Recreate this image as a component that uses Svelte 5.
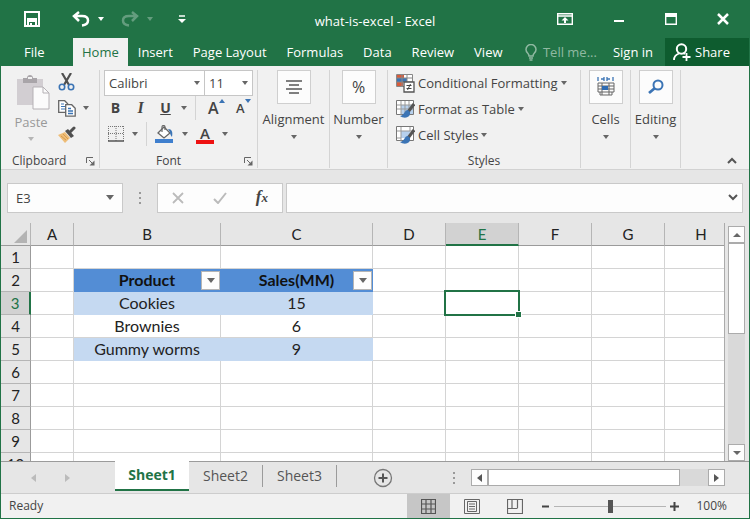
<script>
    let columns = ['A', 'B', 'C', 'D', 'E', 'F', 'G', 'H'];
    let rows = [1, 2, 3, 4, 5, 6, 7, 8, 9, 10];
    let cells = {
        B2: 'Product',
        C2: 'Sales(MM)',
        B3: 'Cookies',
        C3: '15',
        B4: 'Brownies',
        C4: '6',
        B5: 'Gummy worms',
        C5: '9',
    };
    let menu = ['Insert', 'Page Layout', 'Formulas', 'Data', 'Review', 'View'];
    let sheets = ['Sheet1', 'Sheet2', 'Sheet3'];

    let activeCol = 'E';
    let activeRow = 3;
    let activeSheet = 'Sheet1';
    let formula = '';
    let zoom = 100;

    $: cellName = activeCol + activeRow;

    function select(col, row) {
        activeCol = col;
        activeRow = row;
        formula = cells[col + row] || '';
    }

    function inTable(col, row) {
        return (col === 'B' || col === 'C') && row >= 2 && row <= 5;
    }
</script>

<div class="window">
    <header class="titlebar">
        <div class="quick">
            <button class="save" aria-label="Save">
                <svg width="16" height="16" viewBox="0 0 16 16"><path d="M1 1h14v14H1z" fill="none" stroke="#fff" stroke-width="2" /><path d="M3 8h10M4 14v-4h8v4" fill="none" stroke="#fff" stroke-width="2" /><path d="M6 12h2v3H6z" fill="#fff" /></svg>
            </button>
            <button aria-label="Undo">
                <svg width="18" height="16" viewBox="0 0 18 16"><path d="M7 1 2 5l5 5M2 5h8c4 0 6 2 6 4.500S14 14 10 14.500" fill="none" stroke="#fff" stroke-width="2.500" /></svg>
                <span class="arrow light"></span>
            </button>
            <button class="faded" aria-label="Redo">
                <svg width="18" height="16" viewBox="0 0 18 16"><path d="m11 1 5 4-5 5M16 5H8C4 5 2 7 2 9.500S4 14 8 14.500" fill="none" stroke="#fff" stroke-width="2.500" /></svg>
                <span class="arrow light"></span>
            </button>
            <button aria-label="Customize Quick Access Toolbar">
                <svg width="8" height="8" viewBox="0 0 8 8"><path d="M1 1h6" stroke="#fff" stroke-width="1.500" /><path d="M0 4h8L4 8z" fill="#fff" /></svg>
            </button>
        </div>
        <div class="title">what-is-excel - Excel</div>
        <div class="controls">
            <button aria-label="Ribbon Display Options">
                <svg width="16" height="12" viewBox="0 0 16 12"><path d="M.7.7h14.600v10.600H.7zM1 3h14" fill="none" stroke="#fff" stroke-width="1.400" /><path d="M8 4 4.500 7.500H7V10h2V7.500h2.500z" fill="#fff" /></svg>
            </button>
            <button aria-label="Minimize">
                <svg width="12" height="12" viewBox="0 0 12 12"><path d="M1 8h10" stroke="#fff" stroke-width="2" /></svg>
            </button>
            <button aria-label="Maximize">
                <svg width="12" height="12" viewBox="0 0 12 12"><path d="M.7.7h10.600v10.600H.7z" fill="none" stroke="#fff" stroke-width="1.400" /><path d="M0 0h12v4H0z" fill="#fff" /></svg>
            </button>
            <button aria-label="Close">
                <svg width="12" height="12" viewBox="0 0 12 12"><path d="m1 1 10 10M11 1 1 11" stroke="#fff" stroke-width="2.500" /></svg>
            </button>
        </div>
    </header>

    <nav class="tabs">
        <button class="file">File</button>
        <button class="home">Home</button>
        {#each menu as item}
            <button>{item}</button>
        {/each}
        <button class="tell">
            <svg width="12" height="17" viewBox="0 0 12 17"><path d="M4 12c0-3-3-3-3-6.500a5 5 0 0 1 10 0C11 9 8 9 8 12zM4 14h4M4.500 16h3" fill="none" stroke="currentColor" stroke-width="1.500" /></svg>
            Tell me...
        </button>
        <button class="signin">Sign in</button>
        <button class="share">
            <svg width="18" height="18" viewBox="0 0 18 18"><circle cx="8.500" cy="6" r="4.700" fill="none" stroke="#fff" stroke-width="2" /><path d="M1 17c0-4 2-5.500 5-6.500M10 10l2 1M13.500 10v8M9.500 14h8" fill="none" stroke="#fff" stroke-width="1.800" /></svg>
            Share
        </button>
    </nav>

    <section class="ribbon">
        <div class="group clipboard">
            <div class="tools">
                <button class="paste">
                    <svg width="34" height="36" viewBox="0 0 34 36"><path d="M1 5h26v26H1z" fill="#d2ced2" /><path d="M7 9V4h4c0-4 6-4 6 0h4v5z" fill="#a9a5a9" /><path d="M12 3h4v2h-4z" fill="#f1f1f1" /><path d="M17 13h10l6 6v16H17z" fill="#fbfbfb" stroke="#b5b1b5" /><path d="M27 13v6h6" fill="none" stroke="#b5b1b5" /></svg>
                    <span>Paste</span>
                    <span class="arrow"></span>
                </button>
                <div class="stack">
                    <button aria-label="Cut">
                        <svg width="17" height="18" viewBox="0 0 17 18"><path d="m4 0 7 12M13 0 6 12" stroke="#505050" stroke-width="2.200" /><circle cx="4" cy="14" r="2.700" fill="none" stroke="#3b74b5" stroke-width="1.600" /><circle cx="13" cy="14" r="2.700" fill="none" stroke="#3b74b5" stroke-width="1.600" /></svg>
                    </button>
                    <button aria-label="Copy">
                        <svg width="18" height="17" viewBox="0 0 18 17"><path d="M.7.7h6l3 3v8.600h-9z" fill="#fff" stroke="#666" stroke-width="1.300" /><path d="M3 4h3M3 6.500h4M3 9h4" stroke="#3b74b5" /><path d="M7.700 4.700h6l3.500 3.500v8H7.700z" fill="#fff" stroke="#666" stroke-width="1.300" /><path d="M10 8.500h3M10 11h5M10 13.500h5" stroke="#3b74b5" stroke-width="1.300" /></svg>
                        <span class="arrow"></span>
                    </button>
                    <button aria-label="Format Painter">
                        <svg width="18" height="17" viewBox="0 0 18 17"><path d="m0 9 7-3 5 6-5 5z" fill="#eebd78" /><path d="m3 10 5 4M5 8l5 5" stroke="#d79b4d" /><path d="m7 5 3-2 6 7-3 2z" fill="#505050" /><path d="m12 6 4-4" stroke="#505050" stroke-width="3" stroke-linecap="round" /></svg>
                    </button>
                </div>
            </div>
            <div class="caption"><span>Clipboard</span>
                <button class="launcher" aria-label="Clipboard settings"><svg width="9" height="9" viewBox="0 0 9 9"><path d="M.5 6V.5H7M3 3l4 4" fill="none" stroke="#666" /><path d="M8.500 3.500v5h-5z" fill="#666" /></svg></button>
            </div>
        </div>

        <div class="group font">
            <div class="tools">
                <div class="pickers">
                    <div class="picker family"><select aria-label="Font"><option>Calibri</option></select><span class="arrow"></span></div>
                    <div class="picker"><select aria-label="Font size"><option>11</option></select><span class="arrow"></span></div>
                </div>
                <div class="line">
                    <button class="letter"><b>B</b></button>
                    <button class="letter"><i>I</i></button>
                    <button class="letter"><u>U</u></button>
                    <button class="drop" aria-label="Underline options"><span class="arrow"></span></button>
                    <span class="rule"></span>
                    <button class="grow" aria-label="Increase font size">A<svg width="6" height="4" viewBox="0 0 6 4"><path d="M0 4h6L3 0z" fill="#3b74b5" /></svg></button>
                    <button class="grow small" aria-label="Decrease font size">A<svg width="6" height="4" viewBox="0 0 6 4"><path d="M0 0h6L3 4z" fill="#3b74b5" /></svg></button>
                </div>
                <div class="line second">
                    <button aria-label="Borders">
                        <svg width="16" height="16" viewBox="0 0 16 16"><path d="M.5 0v15M15.500 0v15M0 .5h16M0 7.500h16M8 0v15" fill="none" stroke="#777" stroke-dasharray="1 1" /><path d="M0 15h16" stroke="#555" stroke-width="1.500" /></svg>
                        <span class="arrow"></span>
                    </button>
                    <span class="rule"></span>
                    <button aria-label="Fill color">
                        <svg width="19" height="19" viewBox="0 0 19 19"><path d="m3 8 6-6 6 6-6 5z" fill="#fff" stroke="#666" stroke-width="1.300" /><path d="M7 7V2c0-2 3-2 3 0v3" fill="none" stroke="#666" stroke-width="1.200" /><path d="M13 4c4 0 5 3 4 8-1-1-2-3-2-5z" fill="#3b74b5" /><path d="M0 14h18v4H0z" fill="#3f7fce" /></svg>
                        <span class="arrow"></span>
                    </button>
                    <button aria-label="Font color">
                        <span class="color">A</span>
                        <span class="arrow"></span>
                    </button>
                </div>
            </div>
            <div class="caption"><span>Font</span>
                <button class="launcher" aria-label="Font settings"><svg width="9" height="9" viewBox="0 0 9 9"><path d="M.5 6V.5H7M3 3l4 4" fill="none" stroke="#666" /><path d="M8.500 3.500v5h-5z" fill="#666" /></svg></button>
            </div>
        </div>

        <div class="group alignment">
            <button class="big">
                <span class="tile"><svg width="18" height="14" viewBox="0 0 18 14"><path d="M1 1h16M4 5h10M1 9h16M4 13h10" stroke="#555" stroke-width="1.300" /></svg></span>
                Alignment
                <span class="arrow"></span>
            </button>
        </div>
        <div class="group number">
            <button class="big">
                <span class="tile percent">%</span>
                Number
                <span class="arrow"></span>
            </button>
        </div>

        <div class="group styles">
            <div class="tools">
                <button>
                    <svg width="19" height="19" viewBox="0 0 19 19"><path d="M.5.500h16v12H.5z" fill="#fff" stroke="#888" /><path d="M1 1h7v3H1zM1 8h6v4H1z" fill="#d75b3b" /><path d="M1 4h10v4H1z" fill="#3b74b5" /><path d="M11 0v12M6 0v12M0 4h16M0 8h16" stroke="#888" /><path d="M8 8h10v10H8z" fill="#fff" stroke="#555" stroke-width="1.300" /><path d="M10.500 11.500h5M10.500 14.500h5M14.500 10l-3 6" stroke="#444" /></svg>
                    Conditional Formatting<span class="arrow"></span>
                </button>
                <button>
                    <svg width="19" height="19" viewBox="0 0 19 19"><path d="M.5.500h17v14H.5z" fill="#fff" stroke="#777" /><path d="M5 5h12v9H5z" fill="#b6d0ed" /><path d="M5 1v14M9 1v14M13 1v14M1 5h16M1 9h16" stroke="#999" /><path d="m18 4-6 8" stroke="#555" stroke-width="3" /><path d="M12 10c-4 0-3 5-8 6 4 3 11 2 10-4z" fill="#3b74b5" /></svg>
                    Format as Table<span class="arrow"></span>
                </button>
                <button>
                    <svg width="19" height="19" viewBox="0 0 19 19"><path d="M.5.500h17v14H.5z" fill="#fff" stroke="#777" /><path d="M5 5h9v7H5z" fill="#b6d0ed" /><path d="M5 1v14M14 1v4M1 5h16M1 12h4" stroke="#999" /><path d="m18 4-6 8" stroke="#555" stroke-width="3" /><path d="M12 10c-4 0-3 5-8 6 4 3 11 2 10-4z" fill="#3b74b5" /></svg>
                    Cell Styles<span class="arrow"></span>
                </button>
            </div>
            <div class="caption"><span>Styles</span></div>
        </div>

        <div class="group narrow">
            <button class="big">
                <span class="tile"><svg width="18" height="20" viewBox="0 0 18 20"><path d="M1 0v4M16 0v4M4 2h3M10 2h3M7 0v4M10 0v4" stroke="#3b74b5" stroke-width="1.300" /><path d="M1 6h16v9H1zM3 15v3h12v-3M1 9h16M1 12h16M5 6v12M12 6v12" fill="none" stroke="#666" /><path d="M5 9h6v4H5z" fill="#2f6cb3" /></svg></span>
                Cells
                <span class="arrow"></span>
            </button>
        </div>
        <div class="group narrow">
            <button class="big">
                <span class="tile"><svg width="16" height="16" viewBox="0 0 16 16"><circle cx="10" cy="6" r="4.500" fill="none" stroke="#3b74b5" stroke-width="2" /><path d="m7 9-6 5" stroke="#3b74b5" stroke-width="2.800" /></svg></span>
                Editing
                <span class="arrow"></span>
            </button>
        </div>
        <button class="collapse" aria-label="Collapse the ribbon">
            <svg width="10" height="7" viewBox="0 0 10 7"><path d="m1 6 4-4 4 4" fill="none" stroke="#555" stroke-width="2" /></svg>
        </button>
    </section>

    <section class="formula">
        <div class="namebox"><input aria-label="Name box" value={cellName} readonly /><span class="arrow"></span></div>
        <span class="dots"></span>
        <div class="actions">
            <button aria-label="Cancel"><svg width="12" height="12" viewBox="0 0 12 12"><path d="m1 1 10 10M11 1 1 11" stroke="#bbb" stroke-width="1.800" /></svg></button>
            <button aria-label="Enter"><svg width="14" height="12" viewBox="0 0 14 12"><path d="m1 7 4 4 8-10" fill="none" stroke="#bbb" stroke-width="2" /></svg></button>
            <button class="fx" aria-label="Insert function">f<small>x</small></button>
        </div>
        <div class="entry">
            <input aria-label="Formula bar" bind:value={formula} />
            <svg width="10" height="7" viewBox="0 0 10 7"><path d="m1 1 4 4 4-4" fill="none" stroke="#555" stroke-width="2" /></svg>
        </div>
    </section>

    <main class="sheet">
        <div class="grid">
            <table>
                <colgroup>
                    <col class="col-head" />
                    {#each columns as col}
                        <col class="col-{col}" />
                    {/each}
                </colgroup>
                <thead>
                    <tr>
                        <th class="corner"><svg width="13" height="13" viewBox="0 0 13 13"><path d="M13 0v13H0z" fill="#b3b3b3" /></svg></th>
                        {#each columns as col}
                            <th scope="col" class:current={col === activeCol}>{col}</th>
                        {/each}
                    </tr>
                </thead>
                <tbody>
                    {#each rows as row}
                        <tr>
                            <th scope="row" class:current={row === activeRow}>{row}</th>
                            {#each columns as col}
                                <td
                                    class:head={inTable(col, row) && row === 2}
                                    class:band={inTable(col, row) && row % 2 === 1}
                                    class:active={col === activeCol && row === activeRow}
                                    on:click={() => select(col, row)}
                                >
                                    {cells[col + row] || ''}
                                    {#if inTable(col, row) && row === 2}
                                        <button class="filter" aria-label="Filter {cells[col + row]}"><span class="arrow"></span></button>
                                    {/if}
                                </td>
                            {/each}
                        </tr>
                    {/each}
                </tbody>
            </table>
        </div>
        <div class="vscroll">
            <button aria-label="Scroll up"><span class="arrow up"></span></button>
            <div class="vthumb"></div>
            <div class="vtrack"></div>
            <button aria-label="Scroll down"><span class="arrow"></span></button>
        </div>
    </main>

    <div class="sheets">
        <div class="steps">
            <button aria-label="Previous sheet"><svg width="6" height="8" viewBox="0 0 6 8"><path d="M5 0v8L0 4z" fill="#bbb" /></svg></button>
            <button aria-label="Next sheet"><svg width="6" height="8" viewBox="0 0 6 8"><path d="M0 0v8l5-4z" fill="#bbb" /></svg></button>
        </div>
        {#each sheets as name}
            <button class="sheet-tab" class:open={name === activeSheet} on:click={() => (activeSheet = name)}><span>{name}</span></button>
        {/each}
        <button class="add" aria-label="New sheet">
            <svg width="20" height="20" viewBox="0 0 20 20"><circle cx="10" cy="10" r="8.500" fill="none" stroke="#777" stroke-width="1.300" /><path d="M10 5.500v9M5.500 10h9" stroke="#555" stroke-width="2" /></svg>
        </button>
        <span class="dots"></span>
        <div class="hscroll">
            <button aria-label="Scroll left"><svg width="5" height="8" viewBox="0 0 5 8"><path d="M5 0v8L0 4z" fill="#555" /></svg></button>
            <div class="hthumb"></div>
            <div class="htrack"></div>
            <button aria-label="Scroll right"><svg width="5" height="8" viewBox="0 0 5 8"><path d="M0 0v8l5-4z" fill="#555" /></svg></button>
        </div>
    </div>

    <footer class="status">
        <span class="ready">Ready</span>
        <button class="view on" aria-label="Normal view"><svg width="15" height="15" viewBox="0 0 15 15"><path d="M.5.500h14v14H.5zM5 0v15M10 0v15M0 5h15M0 10h15" fill="none" stroke="#555" stroke-width="1.200" /></svg></button>
        <button class="view" aria-label="Page layout view"><svg width="16" height="15" viewBox="0 0 16 15"><path d="M.5.500h15v14H.5zM3.500 2.500h9v10h-9z" fill="none" stroke="#666" /><path d="M5 5h6M5 7.500h6M5 10h6" stroke="#666" /></svg></button>
        <button class="view" aria-label="Page break view"><svg width="16" height="15" viewBox="0 0 16 15"><path d="M.5.500h15v14H.5zM5 0v9M10.500 0v9M0 9.500h10.500" fill="none" stroke="#666" stroke-width="1.200" /></svg></button>
        <div class="zoom">
            <button aria-label="Zoom out" on:click={() => (zoom -= 10)}><svg width="9" height="9" viewBox="0 0 9 9"><path d="M1 4.500h7" stroke="#444" stroke-width="2" /></svg></button>
            <input type="range" min="10" max="190" bind:value={zoom} aria-label="Zoom" />
            <button aria-label="Zoom in" on:click={() => (zoom += 10)}><svg width="9" height="9" viewBox="0 0 9 9"><path d="M0 4.500h9M4.500 0v9" stroke="#444" stroke-width="2" /></svg></button>
        </div>
        <span class="amount">{zoom}%</span>
    </footer>
</div>

<style>
    :global(body) {
        margin: 0;
    }

    .window {
        display: flex;
        flex-direction: column;
        height: 100vh;
        box-sizing: border-box;
        border: 1px solid #217346;
        border-top: 0;
        background: #e6e6e6;
        color: #444;
        font: 13px/18px "Open Sans", "Noto Sans", sans-serif;
        overflow: hidden;
    }

    .window * {
        box-sizing: border-box;
    }

    button {
        display: flex;
        align-items: center;
        padding: 0;
        border: 0;
        background: none;
        color: inherit;
        font: inherit;
        white-space: nowrap;
    }

    input,
    select {
        min-width: 0;
        padding: 0;
        border: 0;
        background: none;
        color: inherit;
        font: inherit;
        outline: none;
        appearance: none;
    }

    svg {
        display: block;
        flex: none;
    }

    .arrow {
        flex: none;
        width: 0;
        height: 0;
        border: 3px solid transparent;
        border-top: 4px solid #666;
        border-bottom: 0;
    }

    .arrow.light {
        border-top-color: #fff;
    }

    .arrow.up {
        border-top: 0;
        border-bottom: 4px solid #666;
    }

    /* title bar */
    .titlebar {
        display: grid;
        grid-template-columns: 1fr auto 1fr;
        align-items: center;
        height: 38px;
        flex: none;
        background: #217346;
        color: #fff;
    }

    .title {
        padding-top: 4px;
    }

    .quick {
        display: flex;
        align-items: center;
        gap: 17px;
        padding-left: 23px;
    }

    .quick button {
        gap: 8px;
    }

    .quick .save {
        margin-right: 15px;
    }

    .quick button:last-child {
        margin-left: 8px;
    }

    .faded {
        opacity: 0.3;
    }

    .controls {
        display: flex;
        justify-content: flex-end;
        gap: 40px;
        padding-right: 20px;
    }

    /* ribbon tabs */
    .tabs {
        display: flex;
        height: 28px;
        flex: none;
        background: #217346;
        color: #fff;
    }

    .tabs button {
        padding: 0 10px;
    }

    .tabs .file {
        width: 72px;
        padding-left: 23px;
    }

    .tabs .home {
        padding: 0 9px;
        background: #f1f1f1;
        color: #217346;
    }

    .tabs .tell {
        gap: 6px;
        margin-left: auto;
        padding: 0 8px;
        color: #90b9a2;
    }

    .tabs .signin {
        padding: 0 12px 0 8px;
    }

    .tabs .share {
        gap: 4px;
        width: 84px;
        padding-left: 8px;
        background: #0e5c2f;
    }

    /* ribbon */
    .ribbon {
        display: flex;
        height: 104px;
        flex: none;
        padding: 4px 0 1px;
        border-bottom: 1px solid #d2d2d2;
        background: #f1f1f1;
    }

    .group {
        display: flex;
        flex-direction: column;
        flex: none;
        border-right: 1px solid #d4d4d4;
    }

    .group .tools {
        flex: 1;
    }

    .caption {
        position: relative;
        display: flex;
        justify-content: center;
        height: 14px;
        font-size: 12px;
        line-height: 14px;
    }

    .launcher {
        position: absolute;
        right: 4px;
        top: 3px;
    }

    .clipboard {
        width: 99px;
    }

    .clipboard .tools {
        display: flex;
        gap: 8px;
        padding-left: 11px;
    }

    .clipboard .caption {
        justify-content: flex-start;
        padding-left: 11px;
    }

    .paste {
        flex-direction: column;
        align-self: flex-start;
        padding-top: 4px;
        color: #999;
    }

    .paste svg {
        margin: 0 0 3px 4px;
    }

    .paste .arrow {
        margin-top: 6px;
        border-top-color: #b5b5b5;
    }

    .stack {
        display: flex;
        flex-direction: column;
        gap: 8px;
        padding-top: 3px;
    }

    .stack button {
        gap: 7px;
        height: 18px;
    }

    .font {
        width: 158px;
        padding-left: 4px;
    }

    .font .caption {
        padding-right: 24px;
    }

    .pickers {
        display: flex;
        height: 26px;
    }

    .picker {
        display: flex;
        align-items: center;
        width: 49px;
        padding: 0 4px;
        border: 1px solid #c6c6c6;
        background: #fff;
    }

    .picker.family {
        width: 100px;
        border-right: 0;
    }

    .picker select {
        flex: 1;
    }

    .line {
        display: flex;
        align-items: center;
        height: 24px;
        padding-left: 2px;
    }

    .line .letter {
        justify-content: center;
        width: 25px;
        height: 22px;
        padding-right: 6px;
        font-size: 14px;
    }

    .letter i {
        font-family: "Liberation Serif", serif;
        font-size: 16px;
        font-weight: bold;
    }

    .letter u {
        font-weight: bold;
    }

    .rule {
        width: 1px;
        height: 24px;
        margin: 0 8px;
        background: #d4d4d4;
    }

    .line .grow {
        align-items: flex-start;
        width: 24px;
        margin-left: 4px;
        font-size: 16px;
        font-weight: 600;
    }

    .line .small {
        width: 16px;
        font-size: 13px;
    }

    .line.second {
        height: 28px;
        padding-left: 4px;
    }

    .second button {
        gap: 8px;
    }

    .second button:last-child {
        margin-left: 8px;
    }

    .color {
        width: 18px;
        height: 19px;
        border-bottom: 4px solid #e11;
        font-size: 15px;
        font-weight: 600;
        line-height: 16px;
        text-align: center;
    }

    .alignment {
        width: 72px;
    }

    .number {
        width: 58px;
    }

    .narrow {
        width: 50px;
    }

    .big {
        flex-direction: column;
        font-size: 13px;
    }

    .big .arrow {
        margin-top: 7px;
    }

    .tile {
        display: flex;
        align-items: center;
        justify-content: center;
        width: 34px;
        height: 34px;
        margin-bottom: 6px;
        border: 1px solid #cfcfcf;
        background: #fcfcfc;
    }

    .percent {
        font-size: 16px;
    }

    .styles {
        width: 193px;
    }

    .styles .tools {
        padding-left: 8px;
    }

    .styles .tools button {
        gap: 3px;
        height: 26px;
    }

    .collapse {
        align-self: flex-end;
        margin: 0 12px 0 auto;
        padding-bottom: 4px;
    }

    /* formula bar */
    .formula {
        display: flex;
        align-items: center;
        height: 53px;
        flex: none;
        padding: 2px 6px 0;
    }

    .namebox,
    .actions,
    .entry {
        display: flex;
        align-items: center;
        height: 30px;
        border: 1px solid #c9c9c9;
        background: #fdfdfd;
    }

    .namebox {
        width: 116px;
        padding: 0 8px;
    }

    .namebox input {
        flex: 1;
        width: 60px;
    }

    .namebox .arrow {
        border-width: 5px 4px 0;
    }

    .dots {
        flex: none;
        width: 2px;
        height: 12px;
        margin: 0 16px;
        background: repeating-linear-gradient(#999 0 2px, transparent 2px 5px);
    }

    .actions {
        justify-content: space-between;
        width: 126px;
        padding: 0 14px;
    }

    .fx {
        align-items: baseline;
        font: italic bold 17px/20px "Liberation Serif", serif;
    }

    .fx small {
        font-size: 13px;
    }

    .entry {
        flex: 1;
        margin-left: 3px;
        padding: 0 4px 0 8px;
    }

    .entry input {
        flex: 1;
    }

    /* worksheet */
    .sheet {
        display: flex;
        flex: 1;
        min-height: 0;
    }

    .grid {
        flex: 1;
        min-width: 0;
        overflow: hidden;
        border-right: 1px solid #ababab;
    }

    table {
        width: calc(100% + 14px);
        table-layout: fixed;
        border-collapse: separate;
        border-spacing: 0;
        color: #222;
        font: 16px/20px Lato, "Open Sans", sans-serif;
    }

    .col-head {
        width: 30px;
    }

    .col-A {
        width: 43px;
    }

    .col-B {
        width: 147px;
    }

    .col-C {
        width: 152px;
    }

    .col-D,
    .col-E,
    .col-F,
    .col-G {
        width: 73px;
    }

    th,
    td {
        height: 23px;
        padding: 0;
        border-right: 1px solid #d4d4d4;
        border-bottom: 1px solid #d4d4d4;
        text-align: center;
    }

    td {
        position: relative;
        background: #fff;
    }

    th {
        background: #e6e6e6;
        border-color: #b5b5b5;
        font-size: 15px;
        font-weight: normal;
    }

    thead th {
        border-bottom-color: #9b9b9b;
    }

    tbody th {
        border-right-color: #9b9b9b;
    }

    .corner svg {
        margin: 4px 3px 0 auto;
    }

    thead .current {
        border-bottom: 2px solid #217346;
        background: #d2d2d2;
        color: #217346;
    }

    tbody .current {
        border-right: 2px solid #217346;
        background: #d2d2d2;
        color: #217346;
    }

    .head {
        border-color: #538dd5;
        background: #538dd5;
        color: #111;
        font-weight: bold;
    }

    .band {
        border-color: #c5d9f1;
        background: #c5d9f1;
    }

    .active::before {
        content: "";
        position: absolute;
        inset: -2px -2px -2px -2px;
        border: 2px solid #217346;
        z-index: 1;
    }

    .active::after {
        content: "";
        position: absolute;
        right: -4px;
        bottom: -4px;
        width: 5px;
        height: 5px;
        border: 1px solid #fff;
        box-sizing: content-box;
        background: #217346;
        z-index: 2;
    }

    .filter {
        position: absolute;
        right: 0;
        top: 2px;
        justify-content: center;
        width: 19px;
        height: 19px;
        border: 1px solid #b5b5b5;
        background: #fdfdfd;
    }

    .filter .arrow {
        border-width: 5px 4px 0;
    }

    .vscroll {
        display: flex;
        flex-direction: column;
        width: 17px;
        margin: 3px 4px 0 3px;
    }

    .vscroll button,
    .hscroll button {
        flex: none;
        justify-content: center;
        width: 17px;
        height: 17px;
        border: 1px solid #ababab;
        background: #fdfdfd;
    }

    .vscroll .arrow {
        border-left-width: 4px;
        border-right-width: 4px;
    }

    .vthumb {
        flex: 91;
        border: 1px solid #ababab;
        background: #fff;
    }

    .vtrack {
        flex: 112;
        background: #d9d9d9;
    }

    /* sheet tabs */
    .sheets {
        display: flex;
        align-items: center;
        height: 32px;
        flex: none;
        border-top: 1px solid #9b9b9b;
        color: #555;
        font-size: 14px;
    }

    .steps {
        display: flex;
        gap: 28px;
        width: 114px;
        padding-left: 30px;
    }

    .sheet-tab {
        align-self: flex-start;
        width: 74px;
        height: 28px;
    }

    .sheet-tab span {
        flex: 1;
        border-right: 1px solid #9b9b9b;
        line-height: 22px;
    }

    .sheet-tab.open {
        margin-top: -1px;
        height: 30px;
        border-bottom: 2px solid #217346;
        background: #fff;
        color: #217346;
        font-weight: bold;
    }

    .sheet-tab.open span {
        border-right: 0;
    }

    .add {
        margin-left: 36px;
    }

    .sheets .dots {
        margin-left: auto;
    }

    .hscroll {
        display: flex;
        width: 34%;
        margin-right: 24px;
    }

    .hthumb {
        flex: 194;
        border: 1px solid #ababab;
        background: #fff;
    }

    .htrack {
        flex: 29;
        background: #d9d9d9;
    }

    /* status bar */
    .status {
        display: flex;
        align-items: center;
        height: 25px;
        flex: none;
        border-top: 1px solid #cdcdcd;
        background: #f1f1f1;
        font-size: 12px;
    }

    .ready {
        margin-right: auto;
        padding-left: 8px;
    }

    .view {
        justify-content: center;
        width: 43px;
        height: 100%;
    }

    .view.on {
        background: #c6c6c6;
    }

    .zoom {
        display: flex;
        align-items: center;
        gap: 4px;
        margin: 0 17px 0 5px;
    }

    .zoom input {
        width: 112px;
        height: 14px;
        margin: 0;
        background: linear-gradient(#b5b5b5, #b5b5b5) center / 100% 1px no-repeat;
    }

    .zoom input::-webkit-slider-thumb {
        appearance: none;
        width: 5px;
        height: 13px;
        background: #555;
    }

    .amount {
        padding-right: 22px;
    }
</style>
